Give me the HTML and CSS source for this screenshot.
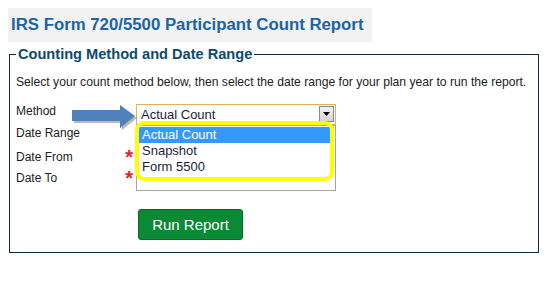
FILE: index.html
```html
<!DOCTYPE html>
<html lang="en">
<head>
  <meta charset="UTF-8" />
  <title>IRS Form 720/5500 Participant Count Report</title>
  <link rel="stylesheet" href="styles.css">
</head>
<body>

  <h1 class="page-title">IRS Form 720/5500 Participant Count Report</h1>

  <fieldset class="report-box">
    <legend>Counting Method and Date Range</legend>
    <p class="intro">Select your count method below, then select the date range for your plan year to run the report.</p>

    <div class="form-grid">
      <label class="field-label">Method</label>
      <div class="field method-field">
        <div class="select-box focused">
          <span class="select-value">Actual Count</span>
          <span class="select-btn">
            <svg width="7" height="4" viewBox="0 0 7 4"><path d="M0 0h7L3.5 4z" fill="#000"/></svg>
          </span>
        </div>
        <!-- open dropdown + callout -->
        <svg class="callout-arrow" width="66" height="28" viewBox="0 0 66 28">
          <path d="M2 9h48V4l15 11-15 12v-7H2z" fill="rgba(0,0,0,0.28)"/>
          <path d="M0 7h48V2l15 11-15 12v-7H0z" fill="#4f81bd"/>
        </svg>
        <ul class="select-list">
          <li class="selected">Actual Count</li>
          <li>Snapshot</li>
          <li>Form 5500</li>
        </ul>
        <div class="callout-ring"></div>
      </div>

      <label class="field-label">Date Range</label>
      <div class="field"><div class="select-box"></div></div>

      <label class="field-label">Date From <span class="req">*</span></label>
      <div class="field"><input class="date-input" type="text"></div>

      <label class="field-label">Date To <span class="req">*</span></label>
      <div class="field"><input class="date-input" type="text"></div>
    </div>

    <div class="actions">
      <button class="btn-run" type="button">Run Report</button>
    </div>
  </fieldset>

</body>
</html>
```

FILE: styles.css
```css
body {
  margin: 8px;
  background: #fff;
  font-family: "Liberation Sans", Arial, sans-serif;
  color: #222;
}
.page-title {
  display: inline-block;
  margin: 0;
  height: 34px;
  line-height: 34px;
  padding: 0 8px 0 3px;
  background-color: #f2f2f2;
  color: #1b65a6;
  font-size: 16.8px;
  font-weight: bold;
}
.report-box {
  box-sizing: border-box;
  width: 530px;
  margin: 4px 0 0 1px;
  padding: 12px 6px 12px 6px;
  border: 1px solid #0c2c3c;
}
.report-box legend {
  padding: 0 2px;
  font-size: 14.6px;
  line-height: 17px;
  font-weight: bold;
  color: #0c4a70;
}
.intro {
  margin: 0;
  font-size: 12.15px;
  line-height: 14px;
}
.form-grid {
  display: grid;
  grid-template-columns: 120px 200px;
  grid-template-rows: 22px 24px 21px 22px;
  margin-top: 15px;
}
.field-label {
  display: flex;
  justify-content: space-between;
  font-size: 12px;
  line-height: 14px;
}
.req {
  margin-right: 3px;
  color: #e8202a;
  font-size: 20px;
  font-weight: bold;
  line-height: 14px;
  vertical-align: -4px;
}
.field {
  position: relative;
}
.method-field {
  z-index: 2;
}
.select-box {
  box-sizing: border-box;
  position: relative;
  width: 200px;
  height: 21px;
  border: 1px solid #a5a5a5;
  background: #fff;
}
.select-box.focused {
  border-color: #deb063;
}
.select-value {
  display: block;
  padding-left: 4px;
  font-size: 13px;
  line-height: 19px;
  color: #1c1c3c;
}
.select-btn {
  position: absolute;
  top: 1px;
  right: 1px;
  width: 15px;
  height: 16px;
  box-sizing: border-box;
  display: flex;
  align-items: center;
  justify-content: center;
  border: 1px solid #8a8a8a;
  background: linear-gradient(#f4f4f4, #d2d2d2);
}
.date-input {
  box-sizing: border-box;
  width: 200px;
  height: 20px;
  margin: 0;
  border: 1px solid #a5a5a5;
}
.callout-arrow {
  position: absolute;
  left: -64px;
  top: -1px;
}
.select-list {
  position: absolute;
  top: 21px;
  left: 0;
  box-sizing: border-box;
  width: 200px;
  height: 66px;
  margin: 0;
  padding: 1px 1px 0;
  list-style: none;
  border: 1px solid #a5a5a5;
  background: #fff;
  font-size: 13px;
  color: #1c1c3c;
}
.select-list li {
  height: 16px;
  line-height: 16px;
  padding-left: 4px;
}
.select-list li.selected {
  background-color: #3399ff;
  color: #fff;
}
.callout-ring {
  position: absolute;
  left: -1px;
  top: 17px;
  box-sizing: border-box;
  width: 199px;
  height: 60px;
  border: 4px solid #ffff00;
  border-radius: 9px;
}
.actions {
  margin-top: 16px;
  padding-left: 122px;
}
.btn-run {
  width: 105px;
  height: 31px;
  padding: 0;
  border: 1px solid #08692a;
  border-radius: 3px;
  background-color: #0a8a35;
  color: #fff;
  font-family: "Liberation Sans", Arial, sans-serif;
  font-size: 15px;
}
```
